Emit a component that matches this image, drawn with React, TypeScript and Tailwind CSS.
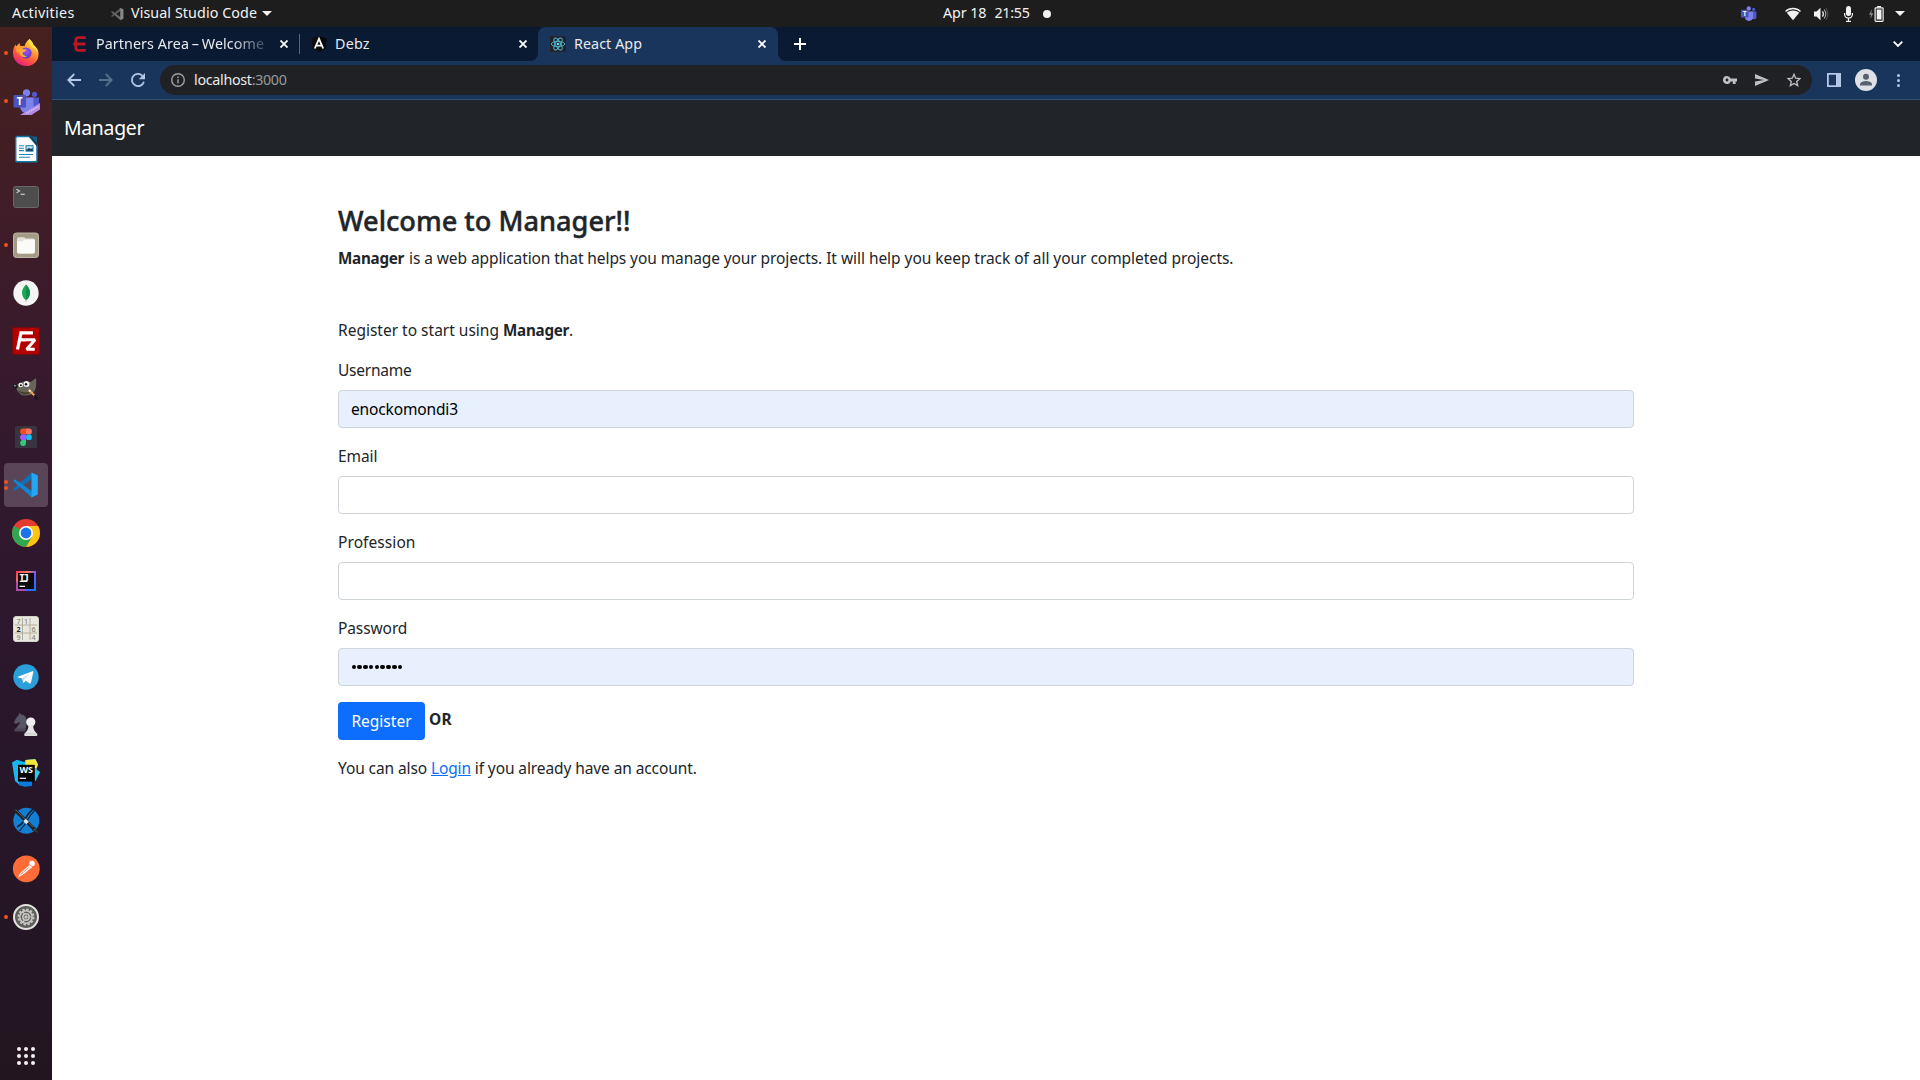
import React from "react";

type IconProps = { children: React.ReactNode };

function Glyph({ children }: IconProps) {
  return (
    <svg width="28" height="28" viewBox="0 0 28 28" className="block shrink-0">
      {children}
    </svg>
  );
}

const firefox = (
  <Glyph>
    <defs>
      <linearGradient id="ffBody" x1="0.8" y1="0" x2="0.25" y2="1">
        <stop offset="0" stopColor="#fff44f" />
        <stop offset="0.35" stopColor="#ffa436" />
        <stop offset="0.65" stopColor="#ff5a3c" />
        <stop offset="1" stopColor="#e31587" />
      </linearGradient>
      <radialGradient id="ffCore" cx="0.5" cy="0.35" r="0.6">
        <stop offset="0" stopColor="#a254f5" />
        <stop offset="1" stopColor="#5b3bc4" />
      </radialGradient>
    </defs>
    <path
      d="M17.5 0C19 1.5 21 3.500 21.500 6c2.200 1.500 4 3.600 4.700 6 .6 2.600.5 5.600-.7 8.200-2 4.300-6.200 7-11.500 6.900C7 27 1.500 21.900 1 15.300.8 11.500 1.500 8 3.500 5.500c.3 1 .6 1.500 1 2 .8-1.600 1.800-2.800 3.200-3.600-.1 1.300.3 2.500 1 3.200 1.300-.3 2.600-.2 3.800.2C13.300 4.500 15 1.600 17.500 0z"
      fill="url(#ffBody)"
    />
    <path d="M3.500 7.500C5 6.300 7 6.500 8.700 7.300l4 .6-1.500 2.600-3 1.500L5 15z" fill="#ff9b30" />
    <circle cx="14" cy="14" r="5.600" fill="url(#ffCore)" />
    <path d="M7 10.500c2-.8 4.500-.6 7.500.3-.5 1.800-2.200 2.200-4 2.800-.3 2 1.600 3.600 4.300 3.600-1.500 1.500-5.300 1.300-6.800-1.200-.8-1.800-1-3.700-1-5.500z" fill="#ffab3d" />
    <path d="M17.500 0c1.500 1.500 3.500 3.500 4 6 2.500 2 4 4.500 4 7.500-1-2.500-2-3.500-3.500-4.300C17.500 7.500 16 4 17.500 0z" fill="#ffdf3f" />
  </Glyph>
);

function TeamsShape() {
  return (
    <>
      <circle cx="22.500" cy="7.300" r="2.600" fill="#5059c9" />
      <circle cx="14.500" cy="5.800" r="3.600" fill="#7b83eb" />
      <path d="M18 10.500h9v8.500a4 4 0 0 1-8 1z" fill="#5059c9" />
      <path d="M8 10.500h13.500v9a6.700 6.700 0 0 1-13.500 0z" fill="#7b83eb" />
      <rect x="1.500" y="8" width="12.500" height="12.500" rx="1.200" fill="#4b53bc" />
      <text x="7.700" y="17.800" fontSize="10" fontWeight="700" fontFamily="Noto Sans, sans-serif" fill="#fff" textAnchor="middle">
        T
      </text>
    </>
  );
}

const teams = (
  <Glyph>
    <TeamsShape />
    <path d="M8 28L28 16v6.500L19.500 28z" fill="#b28be6" />
    <path d="M14 26.500L27 19.300" stroke="#dcc8f7" strokeWidth="1.400" strokeDasharray="1.200 .7" />
  </Glyph>
);

const writer = (
  <Glyph>
    <path d="M5.500 1.500h13l6.500 8V25a1.800 1.800 0 0 1-1.800 1.800H5.500A1.800 1.800 0 0 1 3.700 25V3.300A1.800 1.800 0 0 1 5.500 1.500z" fill="#fff" stroke="#1278a8" strokeWidth="1.500" />
    <path d="M19 1.500h6v7z" fill="#0f5f88" />
    <path d="M17.500 1l8 9.500" stroke="#16405a" strokeWidth="2" />
    <path d="M7 10.800h5M7 13.200h5M7 15.600h5M7 19.500h14M7 22.200h11" stroke="#1b86bb" strokeWidth="1.100" />
    <rect x="13.500" y="10.200" width="8" height="6.500" fill="#1b78ac" />
    <path d="M14.500 15.700l2.500-2.500 1.500 1 1.500-1 1 2.500z" fill="#263a45" />
    <path d="M14.500 11.200h6v2l-2 .6-1.500-1-2.500 1.400z" fill="#c5e3f3" />
  </Glyph>
);

const terminal = (
  <Glyph>
    <rect x="1.500" y="3.500" width="25" height="21" rx="2" fill="#4d4d4d" stroke="#686868" />
    <path d="M4.500 6.300l3 1.800-3 1.800" fill="none" stroke="#d8d8d8" strokeWidth="1.100" />
    <path d="M8.700 11.300h4" stroke="#d8d8d8" strokeWidth="1.100" />
  </Glyph>
);

const files = (
  <Glyph>
    <rect x="1.500" y="2" width="25" height="24.500" rx="2.800" fill="#a39b86" stroke="#bdb6a5" />
    <path d="M5 8.200A2 2 0 0 1 7 6.200h4.500a2 2 0 0 1 1.900 1.400h7.600a2 2 0 0 1 2 2v10.900a2 2 0 0 1-2 2H7a2 2 0 0 1-2-2z" fill="#e4e1da" />
    <path d="M5 10.200h5.500c1.500 0 1.500-1.700 3-1.700H21a2 2 0 0 1 2 2v10a2 2 0 0 1-2 2H7a2 2 0 0 1-2-2z" fill="#fafaf8" />
  </Glyph>
);

const mongo = (
  <Glyph>
    <circle cx="14" cy="14" r="12.700" fill="#f5f5f5" />
    <path d="M14 5.500c2.500 2.800 4 5 4 8.200 0 3.200-1.700 5.600-3.700 7.300h-.6c-2-1.700-3.700-4.100-3.700-7.300 0-3.200 1.500-5.400 4-8.200z" fill="#13aa52" />
    <path d="M14 5.500c2.500 2.800 4 5 4 8.200 0 3.200-1.700 5.600-3.700 7.300H14z" fill="#118d4d" />
    <path d="M14 20v2.800" stroke="#9aa" strokeWidth=".8" />
  </Glyph>
);

const filezilla = (
  <Glyph>
    <rect x=".7" y=".7" width="26.600" height="26.600" fill="#b50000" stroke="#7d0808" strokeWidth="1.200" strokeDasharray="1.500 1" />
    <path d="M9.300 5.800H21M9.300 4.300L5.500 22.500M7.800 12.800h6" fill="none" stroke="#fff" strokeWidth="3.200" />
    <path d="M13.500 12.700h9.500l-8.300 9.600h8" fill="none" stroke="#fff" strokeWidth="2.900" strokeLinejoin="bevel" />
  </Glyph>
);

const gimp = (
  <Glyph>
    <path d="M3 11.500C6 8.500 9 7.500 11.500 6.500c3 1 6 .8 8.500-.3 1.500-1.500 2.500-2 4-3.200.3 5 .8 9-1.500 13-2 3.500-6 5-10.500 4.500-4-.4-6.500-4-9-9z" fill="#69655a" />
    <path d="M6 15c3 2.500 9 3.500 15 0-2 3.500-5.500 4.700-9 4.500-3-.3-4.700-2-6-4.500z" fill="#46432f" />
    <ellipse cx="3.500" cy="11.500" rx="2.500" ry="2.200" fill="#1c1c1e" />
    <circle cx="2.900" cy="10.700" r=".9" fill="#8a9eb5" />
    <circle cx="8.700" cy="10" r="2.300" fill="#f3f3f3" />
    <circle cx="14.500" cy="9" r="3" fill="#f3f3f3" />
    <circle cx="8.900" cy="10.200" r="1" fill="#111" />
    <circle cx="14" cy="9.200" r="1.200" fill="#111" />
    <path d="M17 15l6 6" stroke="#e6a355" strokeWidth="2.200" />
    <path d="M17 15l1.500 1.500" stroke="#f5e6cf" strokeWidth="2.200" />
    <path d="M22.500 20l2.500 4 .8.200" stroke="#15151a" strokeWidth="2" fill="none" />
  </Glyph>
);

const figma = (
  <Glyph>
    <rect x="3" y="3" width="22" height="22" rx="1.500" fill="#383540" />
    <path d="M14 5.500h-3a2.900 2.900 0 0 0 0 5.800h3z" fill="#f24e1e" />
    <path d="M14 5.500h3a2.900 2.900 0 0 1 0 5.800h-3z" fill="#ff7262" />
    <path d="M14 11.300h-3a2.900 2.900 0 0 0 0 5.800h3z" fill="#a259ff" />
    <circle cx="16.900" cy="14.200" r="2.900" fill="#1abcfe" />
    <path d="M14 17.100h-3a2.900 2.900 0 1 0 3 2.900z" fill="#34c978" />
  </Glyph>
);

function CodeShape({ dark, mid, light }: { dark: string; mid: string; light: string }) {
  return (
    <>
      <path d="M19.800 1.500L1.200 18l1.700 1.800L20.500 7.500z" fill={mid} />
      <path d="M19.800 26.500L1.200 10l1.700-1.800 17.600 12.300z" fill={dark} />
      <path d="M19.500 1.500l6.300 3v19l-6.300 3z" fill={light} />
    </>
  );
}

const vscode = (
  <Glyph>
    <CodeShape dark="#1087d2" mid="#0d72b9" light="#26a6f2" />
  </Glyph>
);

const chrome = (
  <Glyph>
    <circle cx="14" cy="14" r="14" fill="#e33b2e" />
    <path d="M1.880 7A14 14 0 0 0 14 28l6.060-10.500L14 14z" fill="#2da94f" />
    <path d="M14 28A14 14 0 0 0 26.120 7H14l6.060 10.500z" fill="#fdc413" />
    <path d="M1.880 7L7.940 17.500 14 14z" fill="#2da94f" />
    <circle cx="14" cy="14" r="7" fill="#fff" />
    <circle cx="14" cy="14" r="5.400" fill="#1b74e8" />
  </Glyph>
);

const intellij = (
  <Glyph>
    <defs>
      <linearGradient id="ijEdge" x1="0" y1="0" x2="1" y2="1">
        <stop offset="0" stopColor="#fe315d" />
        <stop offset="0.3" stopColor="#f97a5a" />
        <stop offset="0.55" stopColor="#6b57ff" />
        <stop offset="1" stopColor="#087cfa" />
      </linearGradient>
    </defs>
    <rect x="4" y="4" width="20" height="20" fill="url(#ijEdge)" />
    <path d="M4 14v10h10z" fill="#b04bb0" />
    <rect x="6" y="6" width="16" height="16" fill="#0b0b0c" />
    <text x="7" y="15" fontSize="9.800" fontWeight="700" fontFamily="DejaVu Sans Mono, monospace" fill="#fff" textLength="10">
      IJ
    </text>
    <path d="M7.500 19.300h5.500" stroke="#fff" strokeWidth="1.200" />
  </Glyph>
);

const sudoku = (
  <Glyph>
    <rect x="1.500" y="1.500" width="25" height="25" rx="2.500" fill="#e9e8df" stroke="#d3d1c4" />
    <path d="M10.500 3v22M18 3v22M3 10h22M3 18h22" stroke="#b3ae9c" strokeWidth="1" />
    <g fontSize="7.200" fontFamily="Noto Sans, sans-serif" fill="#7d7868" textAnchor="middle">
      <text x="6.500" y="8.700">7</text>
      <text x="14" y="8.700">1</text>
      <text x="6.500" y="16.500" fill="#222" fontWeight="700">2</text>
      <text x="21.500" y="16.500">6</text>
      <text x="6.500" y="24.500">9</text>
      <text x="21.500" y="24.500">4</text>
    </g>
  </Glyph>
);

const telegram = (
  <Glyph>
    <circle cx="14" cy="14" r="12.700" fill="#2b9fda" />
    <path d="M5.800 13.800L20.500 8.200c.6-.2 1 .1.800 1l-2.400 10.600c-.2.800-.7 1-1.400.6l-3.700-2.700-1.800 1.800c-.5.500-.9.200-1-.3l-.9-3.600-3.900-1.200c-.8-.2-.8-.5-.4-.6z" fill="#fff" />
    <path d="M10.300 15.300l7.700-4.700-6.200 5.900-.5 2.600z" fill="#bcd9ec" />
  </Glyph>
);

const chess = (
  <Glyph>
    <path d="M7.500 1.500l1.500 2c4 .3 6 3.500 6 7.500 0 4-1.500 5-1.500 8H4c0-3.500 3.500-5 4-8-1.700.8-3 1.300-4.300 2L2 11.500c1-2.500 2.500-5.500 4.700-7.500z" fill="#585566" />
    <path d="M2.500 17.500h11v3h-11z" fill="#4a4757" />
    <circle cx="18.800" cy="11" r="4.600" fill="#f0f0ee" />
    <path d="M16.500 14.500h4.600c.3 3 .6 4.600 3 7.200v1H13.300v-1c2.500-2.600 3-4.200 3.200-7.200z" fill="#e4e4e2" />
    <rect x="12.300" y="22.200" width="13" height="2.700" rx=".6" fill="#dcdcda" />
  </Glyph>
);

const webstorm = (
  <Glyph>
    <path d="M0 3.500L5 .8l7 2.200 2-1.500v20L8 26.500 3 22z" fill="#17b7f0" />
    <path d="M13 1l10-1 3 5.500-1.500 5 3.500 2.500-4.500 9H13z" fill="#36c7e8" />
    <path d="M14 1l9.500-.8L26 5.500 24.500 9H13z" fill="#f3e63c" />
    <path d="M7 18l13 2v7l-7.500.8L7 26z" fill="#087cda" />
    <rect x="6" y="5.800" width="16.800" height="16.800" fill="#050505" />
    <text x="14.200" y="14" fontSize="8.300" fontWeight="700" fontFamily="Noto Sans, sans-serif" fill="#fff" textAnchor="middle" textLength="13.500" lengthAdjust="spacingAndGlyphs">
      WS
    </text>
    <path d="M7.700 19.300H14" stroke="#fff" strokeWidth="1.200" />
  </Glyph>
);

const pen = (
  <Glyph>
    <circle cx="14.300" cy="13.800" r="13" fill="#147fd2" />
    <path d="M21.500 2C16 6 14 10 12.500 13.500c-2 3-4 4.500-7.500 6.500" fill="none" stroke="#0a2540" strokeWidth="1.600" />
    <path d="M22.500 4c-4 3-5.500 6-7 9-1.500 4-4.500 6.500-8 11" fill="none" stroke="#0a2540" strokeWidth="1.200" />
    <path d="M2.500 2.500L22 22" stroke="#202327" strokeWidth="3.400" />
    <path d="M3.500 2.500L21 20" stroke="#6f747a" strokeWidth=".7" />
    <path d="M12.500 13l3 3" stroke="#e4e6e8" strokeWidth="3.600" />
    <path d="M20 23l3-3 3.500 6.500z" fill="#3b3e43" stroke="#1a1c1f" strokeWidth=".6" />
  </Glyph>
);

const postman = (
  <Glyph>
    <circle cx="14.300" cy="13.800" r="13.400" fill="#ff6c37" />
    <circle cx="20" cy="8.500" r="2.800" fill="#fff" />
    <path d="M18.200 9.500l2.500 2.300-9.500 7.700L6 22.300l2.500-4.600z" fill="#fff" />
    <path d="M8.500 19.500l9-7.500M17.500 10l3.200 1.700" stroke="#ff6c37" strokeWidth=".8" />
  </Glyph>
);

const settings = (
  <Glyph>
    <circle cx="14" cy="14" r="12" fill="#5e5e5c" stroke="#e3e2df" strokeWidth="2" />
    <circle cx="14" cy="14" r="7.600" fill="none" stroke="#c9c8c4" strokeWidth="1.800" strokeDasharray="2.390 1.590" />
    <circle cx="14" cy="14" r="6.200" fill="none" stroke="#c9c8c4" strokeWidth="1.500" />
    <circle cx="14" cy="14" r="3.200" fill="none" stroke="#c9c8c4" strokeWidth="1.500" />
    <path d="M16.500 14h4M12.700 16.200l-2 3.500M12.700 11.800l-2-3.500" stroke="#c9c8c4" strokeWidth="1.200" />
    <circle cx="14" cy="14" r="1.700" fill="#c9c8c4" />
  </Glyph>
);

const appGrid = (
  <Glyph>
    {[7, 14, 21].map((y) => [7, 14, 21].map((x) => <circle key={`${x}-${y}`} cx={x} cy={y} r="2" fill="#f2f0f1" />))}
  </Glyph>
);

const dock: { name: string; icon: React.ReactNode; dots: number; active?: boolean }[] = [
  { name: "Firefox", icon: firefox, dots: 1 },
  { name: "Teams", icon: teams, dots: 1 },
  { name: "Writer", icon: writer, dots: 0 },
  { name: "Terminal", icon: terminal, dots: 0 },
  { name: "Files", icon: files, dots: 1 },
  { name: "MongoDB Compass", icon: mongo, dots: 0 },
  { name: "FileZilla", icon: filezilla, dots: 0 },
  { name: "GIMP", icon: gimp, dots: 0 },
  { name: "Figma", icon: figma, dots: 0 },
  { name: "Visual Studio Code", icon: vscode, dots: 2, active: true },
  { name: "Chrome", icon: chrome, dots: 0 },
  { name: "IntelliJ", icon: intellij, dots: 0 },
  { name: "Sudoku", icon: sudoku, dots: 0 },
  { name: "Telegram", icon: telegram, dots: 0 },
  { name: "Chess", icon: chess, dots: 0 },
  { name: "WebStorm", icon: webstorm, dots: 0 },
  { name: "Notes", icon: pen, dots: 0 },
  { name: "Postman", icon: postman, dots: 0 },
  { name: "Settings", icon: settings, dots: 1 },
];

function Dock() {
  return (
    <aside className="flex w-[52px] shrink-0 flex-col justify-between bg-[linear-gradient(180deg,#47211f_0%,#3f1c28_18%,#351a2d_36%,#2f182e_50%,#28162a_70%,#22151f_100%)] pt-0.5">
      <ul>
        {dock.map((d) => (
          <li key={d.name} title={d.name} className="flex h-12 items-center px-1">
            <div className={d.active ? "flex h-11 w-11 items-center rounded bg-[#594458]" : "flex h-11 w-11 items-center rounded"}>
              <div className="flex w-2 flex-col gap-[2px]">
                {Array.from({ length: d.dots }, (_, i) => (
                  <span key={i} className="h-1 w-1 rounded-full bg-[#e95420]" />
                ))}
              </div>
              {d.icon}
            </div>
          </li>
        ))}
      </ul>
      <div className="flex h-12 items-center pl-3">{appGrid}</div>
    </aside>
  );
}

function Caret() {
  return (
    <svg width="10" height="5" viewBox="0 0 10 5" className="block">
      <path d="M0 0h10L5 5z" fill="#f2f2f2" />
    </svg>
  );
}

function TopBar() {
  return (
    <header className="grid h-[27px] shrink-0 grid-cols-[943px_1fr_auto] items-center bg-[#1d1d1d] text-[14.300px] leading-5 text-[#f2f2f2]">
      <div className="flex items-center pl-3">
        <span className="w-[98px] pb-px tracking-[0.300px]">Activities</span>
        <svg width="15" height="14" viewBox="0 0 28 28" className="mr-[6px]">
          <CodeShape dark="#6c6c6c" mid="#5b5b5b" light="#8a8a8a" />
        </svg>
        <span className="pb-px tracking-[0.080px]">Visual Studio Code</span>
        <span className="ml-[5px]">
          <Caret />
        </span>
      </div>
      <div className="flex items-center">
        <span className="mr-2 pb-px tracking-[-0.080px]">Apr 18</span>
        <span className="pb-px tracking-[-0.250px]">21:55</span>
        <span className="ml-[13px] h-2 w-2 rounded-full bg-[#f2f2f2]" />
      </div>
      <div className="flex items-center pr-[15px]">
        <svg width="17" height="17" viewBox="0 0 28 28" className="mr-[28px]">
          <TeamsShape />
        </svg>
        <svg width="16" height="14" viewBox="0 0 16 14" className="mr-[13px]">
          <path d="M.5 4.500C4.500.5 11.500.5 15.500 4.500" fill="none" stroke="#f2f2f2" strokeWidth="1.300" />
          <path d="M1.800 5.800C5.500 2.700 10.500 2.700 14.200 5.800L8 13.300z" fill="#f2f2f2" />
        </svg>
        <svg width="15" height="14" viewBox="0 0 15 14" className="mr-[15px]">
          <path d="M0 4.500h2.500L6.500.8v12.400L2.500 9.500H0z" fill="#f2f2f2" />
          <path d="M8.500 4.300q1.800 2.700 0 5.400" fill="none" stroke="#f2f2f2" strokeWidth="1.200" />
          <path d="M10.200 2.500q3.200 4.500 0 9" fill="none" stroke="#a8a8a8" strokeWidth="1.100" />
          <path d="M12 1.200q3.600 5.800 0 11.600" fill="none" stroke="#555" strokeWidth="1" />
        </svg>
        <svg width="9" height="16" viewBox="0 0 9 16" className="mr-[16px]">
          <rect x="2" y="0" width="5" height="10" rx="2.500" fill="#f2f2f2" />
          <path d="M.6 7v1.500a3.900 3.500 0 0 0 7.800 0V7M4.500 12v3M2 15.300h5" fill="none" stroke="#f2f2f2" strokeWidth="1.200" />
        </svg>
        <svg width="15" height="16" viewBox="0 0 15 16" className="mr-[11px]">
          <path d="M3 3L0 8.800h2L1.300 13l3-5.700H2.200z" fill="#8b8b8b" />
          <path d="M8 0h4v1.500H8z" fill="#f2f2f2" />
          <rect x="6.100" y="1.800" width="8" height="13.500" rx=".8" fill="none" stroke="#f2f2f2" strokeWidth="1.200" />
          <rect x="7.700" y="3.500" width="4.800" height="10" fill="#f2f2f2" />
        </svg>
        <Caret />
      </div>
    </header>
  );
}

function CloseIcon() {
  return (
    <svg width="8" height="8" viewBox="0 0 8 8" className="block shrink-0">
      <path d="M.5.5l7 7M7.500.5l-7 7" stroke="#fff" strokeWidth="1.800" />
    </svg>
  );
}

function TabStrip() {
  return (
    <div className="flex h-[34px] bg-[#0a1a33] text-[14.300px] leading-5 text-[#e8eaed]">
      <div className="flex w-[247px] items-center pl-[21px]">
        <svg width="14" height="16" viewBox="0 0 14 16" className="mr-[9px] shrink-0">
          <path d="M12.800 1.600H5.500A2.800 2.800 0 0 0 2.800 4.300V6.500L1.500 8l1.300 1.500v2.200A2.800 2.800 0 0 0 5.500 14.400h7.300M3 8H12.500" fill="none" stroke="#b9161f" strokeWidth="2.800" />
        </svg>
        <span className="w-[176px] whitespace-nowrap tracking-[0.080px] [mask-image:linear-gradient(90deg,#000_135px,transparent_178px)]">
          Partners Area<span className="mx-[-1px]"> – </span>Welcome
        </span>
        <span className="ml-[8px]">
          <CloseIcon />
        </span>
      </div>
      <div className="my-[7px] w-px bg-[#56647a]" />
      <div className="flex w-[238px] items-center pl-[11px]">
        <svg width="16" height="16" viewBox="0 0 16 16" className="mr-2 shrink-0">
          <path d="M8 0l7.500 2.600-1.200 10L8 16l-6.300-3.400L.5 2.600z" fill="#0f0f10" />
          <path d="M8 0l7.500 2.600-1.200 10L8 16z" fill="#05070b" />
          <path d="M3.800 12.500L8 2.800l4.200 9.700M5.500 9.600h5" fill="none" stroke="#fff" strokeWidth="1.800" />
        </svg>
        <span className="grow tracking-[0.210px]">Debz</span>
        <span className="mr-[11px]">
          <CloseIcon />
        </span>
      </div>
      <div className="flex w-[240px] bg-[#1a355b]">
        <div className="-ml-2 w-2 bg-[#1a355b]">
          <div className="h-full rounded-br-lg bg-[#0a1a33]" />
        </div>
        <div className="flex w-[240px] shrink-0 bg-[#0a1a33]">
          <div className="flex grow items-center rounded-t-lg bg-[#1a355b] pl-3">
            <svg width="16" height="16" viewBox="0 0 16 16" className="mr-2 shrink-0">
              <rect width="16" height="16" rx="1.500" fill="#20232a" />
              <g fill="none" stroke="#53b9d1" strokeWidth=".9">
                <ellipse cx="8" cy="8" rx="6.700" ry="2.600" />
                <ellipse cx="8" cy="8" rx="6.700" ry="2.600" transform="rotate(60 8 8)" />
                <ellipse cx="8" cy="8" rx="6.700" ry="2.600" transform="rotate(120 8 8)" />
              </g>
              <circle cx="8" cy="8" r="1.300" fill="#61dafb" />
            </svg>
            <span className="grow tracking-[0.070px]">React App</span>
            <span className="mr-3">
              <CloseIcon />
            </span>
          </div>
        </div>
      </div>
      <div className="w-2 bg-[#1a355b]">
        <div className="h-full rounded-bl-lg bg-[#0a1a33]" />
      </div>
      <div className="flex grow items-center justify-between pl-2 pr-[17px]">
        <svg width="12" height="12" viewBox="0 0 12 12">
          <path d="M6 0v12M0 6h12" stroke="#fff" strokeWidth="2" />
        </svg>
        <svg width="10" height="6" viewBox="0 0 10 6">
          <path d="M.7.700L5 5 9.300.700" fill="none" stroke="#fff" strokeWidth="1.800" />
        </svg>
      </div>
    </div>
  );
}

function Toolbar() {
  return (
    <div className="flex h-[39px] items-center border-b border-[#34526f] bg-[#1a355b] pl-[15px] pr-5">
      <svg width="14" height="14" viewBox="0 0 14 14" className="mr-[18px]">
        <path d="M14 7H1.500M7.300 1L1.300 7l6 6" fill="none" stroke="#b3c7e6" strokeWidth="1.800" />
      </svg>
      <svg width="14" height="14" viewBox="0 0 14 14" className="mr-[18px]">
        <path d="M0 7h12.500M6.700 1l6 6-6 6" fill="none" stroke="#55708f" strokeWidth="1.800" />
      </svg>
      <svg width="14" height="14" viewBox="0 0 14 14" className="mr-[15px]">
        <path d="M12.900 8.700A6.100 6.100 0 1 1 11.500 2.800" fill="none" stroke="#b3c7e6" strokeWidth="1.800" />
        <path d="M14 0v6.200H7.800z" fill="#b3c7e6" />
      </svg>
      <div className="flex h-[30px] w-[1652px] items-center rounded-full bg-[#202124] pl-[11px] pr-[11px]">
        <svg width="14" height="14" viewBox="0 0 14 14" className="mr-[9px]">
          <circle cx="7" cy="7" r="6.300" fill="none" stroke="#9aa0a6" strokeWidth="1.400" />
          <path d="M7 6.200v4M7 3.600v1.500" stroke="#9aa0a6" strokeWidth="1.500" />
        </svg>
        <span className="text-[14.300px] leading-5 tracking-[-0.300px] text-[#e8eaed]">localhost</span>
        <span className="grow text-[14.300px] leading-5 tracking-[-0.350px] text-[#969a9f]">:3000</span>
        <svg width="14" height="8" viewBox="0 0 14 8" className="mr-[18px]">
          <path d="M4 0a4 4 0 0 1 3.700 2.600H14v2.800h-1.400V8H9.800V5.400H7.700A4 4 0 1 1 4 0zm0 2.600a1.400 1.400 0 1 0 0 2.800 1.400 1.400 0 0 0 0-2.800z" fill="#bdc1c6" />
        </svg>
        <svg width="14" height="12" viewBox="0 0 14 12" className="mr-[18px]">
          <path d="M0 0l14 6-14 6V7.400L9 6 0 4.600z" fill="#bdc1c6" />
        </svg>
        <svg width="14" height="14" viewBox="0 0 14 14">
          <path d="M7 1.300l1.700 3.900 4.300.4-3.300 2.800 1 4.200L7 10.400l-3.700 2.200 1-4.200L1 5.600l4.300-.4z" fill="none" stroke="#bdc1c6" strokeWidth="1.300" />
        </svg>
      </div>
      <svg width="14" height="14" viewBox="0 0 14 14" className="ml-[15px] mr-[14px]">
        <path d="M0 0h14v14H0zM1.800 1.800v10.400H9V1.800z" fill="#b3c7e6" fillRule="evenodd" />
      </svg>
      <svg width="22" height="22" viewBox="0 0 22 22">
        <circle cx="11" cy="11" r="11" fill="#dee1e6" />
        <circle cx="11" cy="7.800" r="3" fill="#5a6270" />
        <path d="M5 16.500v-1.300c0-2.200 4-3.300 6-3.300s6 1.100 6 3.300v1.300z" fill="#5a6270" />
      </svg>
      <svg width="3" height="13" viewBox="0 0 3 13" className="ml-auto">
        <circle cx="1.500" cy="1.500" r="1.500" fill="#b3c7e6" />
        <circle cx="1.500" cy="6.500" r="1.500" fill="#b3c7e6" />
        <circle cx="1.500" cy="11.500" r="1.500" fill="#b3c7e6" />
      </svg>
    </div>
  );
}

const control = "block h-[38px] w-full rounded border border-[#ced4da] px-3 text-[15.500px] leading-6 text-black outline-none";

function Field({ label, labelClass, children }: { label: string; labelClass: string; children: React.ReactNode }) {
  return (
    <div className="mb-4">
      <label className={labelClass}>{label}</label>
      {children}
    </div>
  );
}

function Page() {
  return (
    <main className="grow bg-white text-[15.500px] leading-6 text-[#212529]">
      <div className="mx-auto w-[1296px] pt-12">
        <h3 className="mb-2 text-[27.200px] font-medium leading-[34px] [-webkit-text-stroke:0.450px_#212529]">Welcome to Manager!!</h3>
        <p className="mb-12 tracking-[-0.045px]">
          <b className="mr-[1px] text-[15.200px] tracking-[-0.250px]">Manager</b>
          <span className="tracking-[-0.090px]"> is a web application that helps you manage your projects.</span> It will help you keep track of all your
          completed projects.
        </p>
        <p className="mb-4">
          Register to start using <b className="text-[15.200px] tracking-[-0.250px]">Manager</b>.
        </p>
        <form onSubmit={(e) => e.preventDefault()}>
          <Field label="Username" labelClass="mb-2 block tracking-[-0.250px]">
            <input className={`${control} bg-[#e8f0fe] tracking-[-0.140px]`} defaultValue="enockomondi3" />
          </Field>
          <Field label="Email" labelClass="mb-2 block tracking-[-0.100px]">
            <input className={control} />
          </Field>
          <Field label="Profession" labelClass="mb-2 block tracking-[0.080px]">
            <input className={control} />
          </Field>
          <Field label="Password" labelClass="mb-2 block tracking-[-0.100px]">
            <div className={`${control} flex items-center gap-[1.300px] bg-[#e8f0fe]`}>
              {Array.from({ length: 9 }, (_, i) => (
                <span key={i} className="h-[4.500px] w-[4.500px] rounded-full bg-black first:ml-[0.500px]" />
              ))}
            </div>
          </Field>
          <div className="mb-4 flex items-start gap-1">
            <button className="h-[38px] w-[87px] rounded bg-[#0d6efd] text-white">Register</button>
            <b className="pt-[5px] tracking-[0.300px]">OR</b>
          </div>
        </form>
        <p className="tracking-[-0.100px]">
          You can also <a className="tracking-[-0.150px] text-[#0d6efd] underline">Login</a> if you already have an account.
        </p>
      </div>
    </main>
  );
}

export default function App() {
  return (
    <div className="flex h-[1080px] w-[1920px] flex-col overflow-hidden font-['Noto_Sans',sans-serif]">
      <TopBar />
      <div className="flex min-h-0 grow">
        <Dock />
        <div className="flex grow flex-col">
          <TabStrip />
          <Toolbar />
          <nav className="flex h-14 shrink-0 items-center bg-[#212529] pl-3 text-[19.400px] leading-[30px] tracking-[-0.300px] text-white">Manager</nav>
          <Page />
        </div>
      </div>
    </div>
  );
}
